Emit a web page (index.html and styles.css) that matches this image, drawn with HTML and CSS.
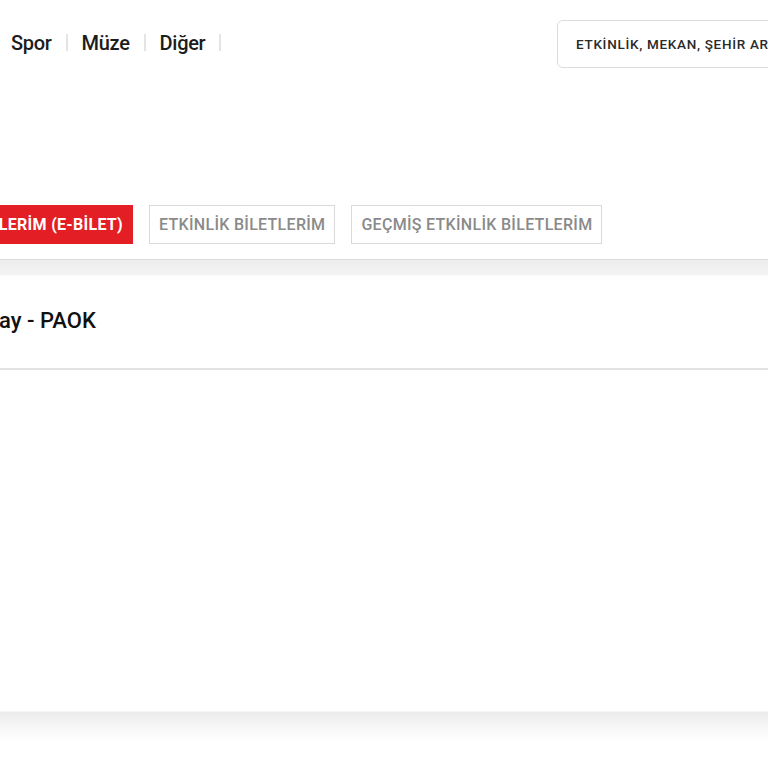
FILE: index.html
```html
<!DOCTYPE html>
<html>
<head>
<meta charset="utf-8">
	<title>Biletlerim</title>

	<link rel="stylesheet" href="styles.css">
</head>
<body>

<div class="header">
	<ul class="nav">
		<li><a href="#">Spor</a></li>
		<li><a href="#">Müze</a></li>
		<li><a href="#">Diğer</a></li>
	</ul>
	<div class="search">
		<input class="search-input" type="text" placeholder="ETKİNLİK, MEKAN, ŞEHİR ARA">
	</div>
</div>

<div class="tabs">
	<a class="tab active" href="#">MOBİL BİLETLERİM (E-BİLET)</a>
	<a class="tab" href="#">ETKİNLİK BİLETLERİM</a>
	<a class="tab" href="#">GEÇMİŞ ETKİNLİK BİLETLERİM</a>
</div>

<div class="tickets">
	<div class="ticket">
		<h2 class="ticket-title">Galatasaray - PAOK</h2>
	</div>
</div>

<div class="footer"></div>

</body>
</html>
```

FILE: styles.css
```css
body{
	margin: 0;
	overflow: hidden;
	font-family: Roboto, "Liberation Sans", sans-serif;
	background: #fff;
	color: #1e1e1e;
}
a{
	text-decoration: none;
}

/* top bar */
.header{
	display: flex;
	align-items: center;
	justify-content: space-between;
	padding: 20px 0 0 11px;
	height: 47px;
}
.nav{
	display: flex;
	align-items: center;
	margin: -2px 0 0 0;
	padding: 0;
	list-style: none;
}
.nav li{
	display: flex;
	align-items: center;
}
.nav li::after{
	content: "";
	display: block;
	width: 2px;
	height: 17px;
	background: #e4e4e4;
	margin: 0 14px;
}
.nav a{
	color: #1c1c1c;
	font-size: 20px;
	font-weight: 500;
	letter-spacing: -0.3px;
}
.search{
	width: 260px;
	margin-right: -49px;
}
.search-input{
	box-sizing: border-box;
	width: 100%;
	height: 48px;
	border: 1px solid #dcdcdc;
	border-radius: 6px;
	padding: 0 0 0 18px;
	font-family: inherit;
	font-size: 13.5px;
	letter-spacing: 0.7px;
	font-weight: 500;
	outline: none;
}
.search-input::placeholder{
	color: #2a2a2a;
}

/* ticket tabs */
.tabs{
	display: flex;
	gap: 16px;
	margin: 138px 0 0 -120px;
}
.tab{
	box-sizing: border-box;
	height: 39px;
	display: flex;
	align-items: center;
	padding: 0 9px;
	border: 1px solid #d9d9d9;
	color: #8a8a8a;
	font-size: 16px;
	letter-spacing: 0.3px;
	font-weight: 500;
	white-space: nowrap;
}
.tab.active{
	width: 253px;
	justify-content: flex-end;
	background: #e31e24;
	border-color: #e31e24;
	color: #fff;
	font-weight: 700;
	letter-spacing: 0.3px;
}

/* ticket list */
.tickets{
	margin-top: 15px;
	border-top: 1px solid #dcdcdc;
	padding-top: 16px;
	background: linear-gradient(#ececec, #f4f4f4 15px, #fff 16px);
	height: 435px;
}
.ticket{
	height: 92px;
	display: flex;
	align-items: center;
	border-bottom: 2px solid #e2e2e2;
	margin-left: -95px;
	background: #fff;
}
.ticket-title{
	margin: -3px 0 0 0;
	font-size: 22px;
	font-weight: 500;
	color: #111;
}

.footer{
	border-top: 1px solid #f6f6f6;
	height: 60px;
	background: linear-gradient(#ebebeb, #f6f6f6 14px, #fff 30px);
}
```
